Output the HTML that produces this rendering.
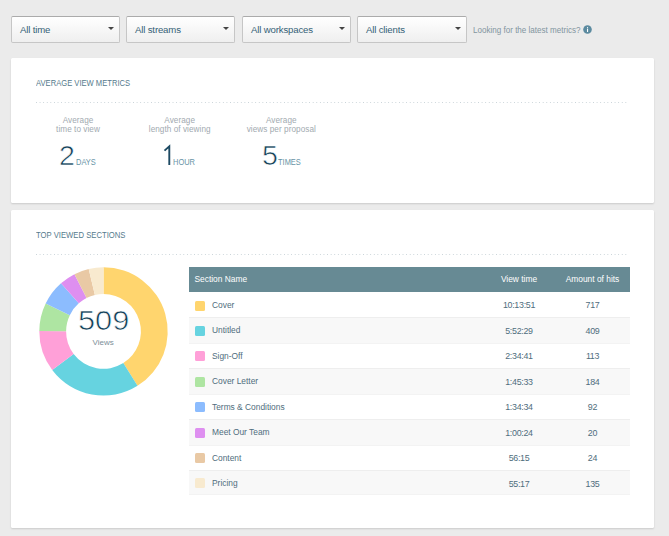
<!DOCTYPE html>
<html><head><meta charset="utf-8">
<style>
html,body{margin:0;padding:0;}
body{width:669px;height:536px;background:#ebebeb;position:relative;overflow:hidden;font-family:"Liberation Sans",sans-serif;}
.a{position:absolute;white-space:nowrap;}
.sel{position:absolute;top:16px;width:109px;height:26.5px;box-sizing:border-box;border:1px solid #c6c6c6;border-top-color:#ababab;border-radius:2px;background:linear-gradient(#ffffff,#efefef);}
.sel span{position:absolute;left:8px;top:6.7px;font-size:9.6px;color:#355f76;letter-spacing:-0.15px;line-height:12px;}
.sel i{position:absolute;right:5px;top:10.2px;width:0;height:0;border-left:3px solid transparent;border-right:3px solid transparent;border-top:3.6px solid #444;}
.card{position:absolute;left:11px;width:643px;background:#fff;border-radius:1.5px;box-shadow:0 1px 2px rgba(0,0,0,0.14);}
.ttl{position:absolute;left:36px;font-size:8.4px;color:#557a8c;line-height:10px;}
.dots{position:absolute;left:35.5px;width:593px;height:1px;background-image:linear-gradient(to right,#c9d3d8 1px,transparent 1px);background-size:3.6px 1px;}
.metric{position:absolute;width:100px;text-align:center;}
.metric .l{font-size:8.2px;color:#a2aab0;line-height:9.6px;letter-spacing:0.05px;}
.big{position:absolute;font-size:27px;color:#123f58;line-height:27px;-webkit-text-stroke:0.6px #fff;transform:scaleX(1.06);transform-origin:0 0;}
.unit{position:absolute;font-size:8.6px;color:#6894a6;line-height:9px;transform:scaleX(0.87);transform-origin:0 0;}
.thead{position:absolute;left:189px;top:267px;width:440.5px;height:24.8px;background:#678a94;}
.thead span{position:absolute;top:7.4px;font-size:8.4px;line-height:10px;color:#fff;}
.gr{position:absolute;left:189px;width:440.5px;background:#f8f8f8;border-top:1px solid #eeeeee;border-bottom:1px solid #f3f3f3;box-sizing:border-box;}
.sw{position:absolute;left:195px;width:10px;height:10px;border-radius:1.5px;}
.rt{font-size:8.4px;line-height:10px;color:#4f6d7d;}
.num{font-size:8.9px;letter-spacing:-0.3px;margin-top:0.6px;}
.c1{left:481px;width:76px;text-align:center;}
.c2{left:555px;width:75px;text-align:center;}
</style></head><body>
<div class="sel" style="left:11px"><span>All time</span><i></i></div>
<div class="sel" style="left:126px"><span>All streams</span><i></i></div>
<div class="sel" style="left:242px"><span>All workspaces</span><i></i></div>
<div class="sel" style="left:357px;width:109.8px"><span>All clients</span><i></i></div>
<div class="a" style="left:473px;top:24px;font-size:9.4px;color:#82959f;line-height:11px;transform:scaleX(0.86);transform-origin:0 0;">Looking for the latest metrics?</div>
<svg class="a" style="left:583px;top:25px" width="9" height="9" viewBox="0 0 9 9"><circle cx="4.5" cy="4.5" r="4.3" fill="#5c8ba0"/><rect x="4" y="3.6" width="1.1" height="3.4" fill="#fff"/><circle cx="4.55" cy="2.5" r="0.6" fill="#fff"/></svg>

<div class="card" style="top:58px;height:145px;"></div>
<div class="card" style="top:210px;height:318px;"></div>

<div class="ttl" style="top:77.5px;font-size:8.6px;transform:scaleX(0.885);transform-origin:0 0">AVERAGE VIEW METRICS</div>
<div class="dots" style="top:102px"></div>
<div class="metric" style="left:28px;top:115.6px"><div class="l">Average</div><div class="l">time to view</div></div>
<div class="metric" style="left:129.7px;top:115.6px"><div class="l">Average</div><div class="l">length of viewing</div></div>
<div class="metric" style="left:231.3px;top:115.6px"><div class="l">Average</div><div class="l">views per proposal</div></div>
<div class="big" style="left:59px;top:143px">2</div><div class="unit" style="left:75.5px;top:157.5px">DAYS</div>
<svg class="a" style="left:0;top:0" width="200" height="170"><path d="M164.5 150.6L169.3 146.4V164.9" fill="none" stroke="#1d4a63" stroke-width="1.9"/></svg><div class="unit" style="left:173px;top:157.5px">HOUR</div>
<div class="big" style="left:262px;top:143px">5</div><div class="unit" style="left:278px;top:157.5px">TIMES</div>

<div class="ttl" style="top:229.6px;font-size:8.6px;transform:scaleX(0.895);transform-origin:0 0">TOP VIEWED SECTIONS</div>
<div class="dots" style="top:254px"></div>
<svg class="a" style="left:0;top:0" width="669" height="536" viewBox="0 0 669 536">
<path d="M103.50 267.20A64.2 64.2 0 0 1 137.51 385.85L123.31 363.12A37.4 37.4 0 0 0 103.50 294.00Z" fill="#ffd56e"/>
<path d="M137.51 385.85A64.2 64.2 0 0 1 52.23 370.04L73.63 353.91A37.4 37.4 0 0 0 123.31 363.12Z" fill="#66d3e0"/>
<path d="M52.23 370.04A64.2 64.2 0 0 1 39.30 331.07L66.10 331.21A37.4 37.4 0 0 0 73.63 353.91Z" fill="#ffa0d8"/>
<path d="M39.30 331.07A64.2 64.2 0 0 1 45.67 303.52L69.81 315.16A37.4 37.4 0 0 0 66.10 331.21Z" fill="#aee5a2"/>
<path d="M45.67 303.52A64.2 64.2 0 0 1 61.00 283.28L78.74 303.37A37.4 37.4 0 0 0 69.81 315.16Z" fill="#8cbcfe"/>
<path d="M61.00 283.28A64.2 64.2 0 0 1 74.46 274.14L86.58 298.04A37.4 37.4 0 0 0 78.74 303.37Z" fill="#de8ff0"/>
<path d="M74.46 274.14A64.2 64.2 0 0 1 88.70 268.93L94.88 295.01A37.4 37.4 0 0 0 86.58 298.04Z" fill="#e9c9a5"/>
<path d="M88.70 268.93A64.2 64.2 0 0 1 103.50 267.20L103.50 294.00A37.4 37.4 0 0 0 94.88 295.01Z" fill="#f8eacf"/>
</svg>
<div class="a" style="left:78px;top:306px;font-size:28.5px;line-height:28px;color:#123f58;-webkit-text-stroke:0.7px #fff;transform:scaleX(1.08);transform-origin:0 0;">509</div>
<div class="a" style="left:92.5px;top:337.5px;font-size:8px;line-height:10px;color:#7d8f99;">Views</div>

<div class="thead"><span style="left:5.5px">Section Name</span><span class="c1" style="left:292px">View time</span><span class="c2" style="left:366px">Amount of hits</span></div>
<div class="gr" style="top:317px;height:26.5px"></div>
<div class="gr" style="top:368px;height:26.5px"></div>
<div class="gr" style="top:419px;height:27.0px"></div>
<div class="gr" style="top:470px;height:25.0px"></div>
<b class="sw" style="top:300.50px;background:#ffd56e"></b><span class="a rt" style="left:212px;top:299.50px">Cover</span><span class="a rt num c1" style="top:299.50px">10:13:51</span><span class="a rt num c2" style="top:299.50px">717</span>
<b class="sw" style="top:325.90px;background:#66d3e0"></b><span class="a rt" style="left:212px;top:325.00px">Untitled</span><span class="a rt num c1" style="top:325.00px">5:52:29</span><span class="a rt num c2" style="top:325.00px">409</span>
<b class="sw" style="top:351.30px;background:#ffa0d8"></b><span class="a rt" style="left:212px;top:350.50px">Sign-Off</span><span class="a rt num c1" style="top:350.50px">2:34:41</span><span class="a rt num c2" style="top:350.50px">113</span>
<b class="sw" style="top:376.70px;background:#aee5a2"></b><span class="a rt" style="left:212px;top:376.00px">Cover Letter</span><span class="a rt num c1" style="top:376.00px">1:45:33</span><span class="a rt num c2" style="top:376.00px">184</span>
<b class="sw" style="top:402.10px;background:#8cbcfe"></b><span class="a rt" style="left:212px;top:401.50px">Terms &amp; Conditions</span><span class="a rt num c1" style="top:401.50px">1:34:34</span><span class="a rt num c2" style="top:401.50px">92</span>
<b class="sw" style="top:427.50px;background:#de8ff0"></b><span class="a rt" style="left:212px;top:427.00px">Meet Our Team</span><span class="a rt num c1" style="top:427.00px">1:00:24</span><span class="a rt num c2" style="top:427.00px">20</span>
<b class="sw" style="top:452.90px;background:#e9c9a5"></b><span class="a rt" style="left:212px;top:452.50px">Content</span><span class="a rt num c1" style="top:452.50px">56:15</span><span class="a rt num c2" style="top:452.50px">24</span>
<b class="sw" style="top:478.30px;background:#f8eacf"></b><span class="a rt" style="left:212px;top:478.00px">Pricing</span><span class="a rt num c1" style="top:478.00px">55:17</span><span class="a rt num c2" style="top:478.00px">135</span>

</body></html>
